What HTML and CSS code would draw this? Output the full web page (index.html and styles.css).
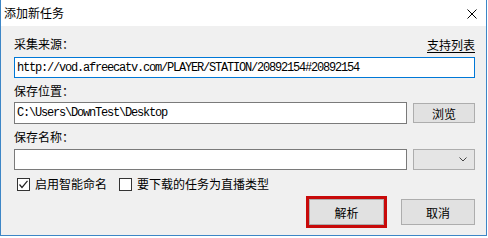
FILE: index.html
```html
<!DOCTYPE html>
<html lang="zh-CN">
<head>
<meta charset="utf-8">
<title>添加新任务</title>
<link rel="stylesheet" href="styles.css">
</head>
<body>
<div class="window">
  <div class="titlebar">
    <span class="title">添加新任务</span>
    <svg class="close" width="10" height="10" viewBox="0 0 10 10"><path d="M0.5 0.5 L9.5 9.5 M9.5 0.5 L0.5 9.5" stroke="#000" stroke-width="1" fill="none"/></svg>
  </div>
  <div class="content">
    <div class="label-row">
      <span>采集来源：</span>
      <span class="link">支持列表</span>
    </div>
    <div class="field focused"><span class="mono">http://vod.afreecatv.com/PLAYER/STATION/20892154#20892154</span></div>
    <div class="label">保存位置：</div>
    <div class="row">
      <div class="field grow"><span class="mono">C:\Users\DownTest\Desktop</span></div>
      <div class="btn side">浏览</div>
    </div>
    <div class="label">保存名称：</div>
    <div class="row row-top">
      <div class="field grow"></div>
      <div class="combo">
        <svg width="8" height="5" viewBox="0 0 8 5"><path d="M0.5 0.5 L4 4 L7.5 0.5" stroke="#444" stroke-width="1" fill="none"/></svg>
      </div>
    </div>
    <div class="checks">
      <span class="check-item">
        <span class="box"><svg width="11" height="11" viewBox="0 0 11 11"><path d="M1.5 5.5 L4 8.5 L9.5 1.8" stroke="#222" stroke-width="1.2" fill="none"/></svg></span>
        <span>启用智能命名</span>
      </span>
      <span class="check-item">
        <span class="box"></span>
        <span>要下载的任务为直播类型</span>
      </span>
    </div>
    <div class="actions">
      <div class="btn action primary">解析</div>
      <div class="btn action cancel">取消</div>
    </div>
  </div>
</div>
</body>
</html>
```

FILE: styles.css
```css
html, body {
  margin: 0;
  padding: 0;
}
body {
  background: #ffffff;
  font-family: "Noto Sans CJK SC", "Microsoft YaHei", sans-serif;
  font-size: 12px;
  color: #000000;
}
.window {
  width: 487px;
  height: 236px;
  box-sizing: border-box;
  border: 1px solid #3d86c6;
  border-top: none;
  background: #f0f0f0;
  display: flex;
  flex-direction: column;
}
.titlebar {
  height: 26px;
  flex: 0 0 26px;
  background: #ffffff;
  display: flex;
  align-items: center;
  justify-content: space-between;
  padding: 0 9px 0 3px;
}
.title {
  line-height: 26px;
}
.close {
  display: block;
  margin-top: 1px;
}
.content {
  padding: 10px 11px 0 13px;
  display: flex;
  flex-direction: column;
}
.label-row {
  display: flex;
  justify-content: space-between;
  line-height: 16px;
  height: 16px;
}
.link {
  text-decoration: underline;
  text-underline-offset: 2px;
  position: relative;
  top: 1px;
}
.label {
  margin-top: 5px;
  line-height: 16px;
  height: 16px;
}
.field {
  height: 21px;
  box-sizing: border-box;
  border: 1px solid #7a7a7a;
  background: #ffffff;
  margin-top: 5px;
  padding: 0 2px;
  display: flex;
  align-items: center;
  overflow: hidden;
}
.field.focused {
  border-color: #0078d7;
}
.mono {
  font-family: "Liberation Mono", "DejaVu Sans Mono", monospace;
  font-size: 12px;
  letter-spacing: -1.2px;
  white-space: nowrap;
}
.row {
  display: flex;
  align-items: center;
  gap: 6px;
  margin-top: 3px;
}
.row .field {
  margin-top: 0;
  height: 22px;
}
.row.row-top {
  align-items: flex-start;
  margin-top: 4px;
}
.row.row-top .field {
  height: 21px;
}
.grow {
  flex: 1 1 auto;
}
.btn {
  box-sizing: border-box;
  border: 1px solid #adadad;
  background: #e1e1e1;
  display: flex;
  align-items: center;
  justify-content: center;
}
.btn.side {
  width: 62px;
  height: 20px;
  flex: 0 0 62px;
}
.combo {
  width: 62px;
  height: 21px;
  flex: 0 0 62px;
  box-sizing: border-box;
  border: 1px solid #adadad;
  background: #e5e5e5;
  display: flex;
  align-items: center;
  justify-content: flex-end;
  padding-right: 7px;
}
.combo svg {
  display: block;
}
.checks {
  display: flex;
  align-items: center;
  margin-top: 7px;
  height: 14px;
  gap: 12px;
  padding-left: 3px;
}
.check-item {
  display: flex;
  align-items: center;
  gap: 5px;
  line-height: 14px;
}
.box {
  width: 13px;
  height: 13px;
  box-sizing: border-box;
  border: 1px solid #333333;
  background: #ffffff;
  display: flex;
  align-items: center;
  justify-content: center;
}
.box svg {
  display: block;
}
.actions {
  display: flex;
  justify-content: flex-end;
  gap: 17px;
  margin-top: 8px;
}
.btn.action {
  height: 26px;
}
.btn.primary {
  width: 75px;
  outline: 3px solid #c80a0a;
  outline-offset: 0;
}
.btn.cancel {
  width: 74px;
}
```
